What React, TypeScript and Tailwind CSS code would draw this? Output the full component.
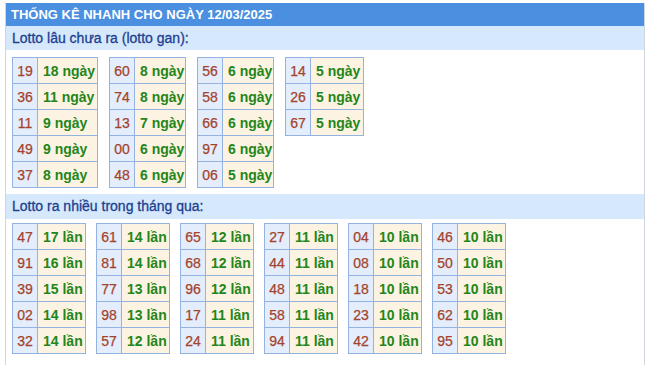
import React from "react";

type Row = [string, string];

const ganTables: { w: string; rows: Row[] }[] = [
  { w: "w-[86px]", rows: [["19", "18 ngày"], ["36", "11 ngày"], ["11", "9 ngày"], ["49", "9 ngày"], ["37", "8 ngày"]] },
  { w: "w-[77px]", rows: [["60", "8 ngày"], ["74", "8 ngày"], ["13", "7 ngày"], ["00", "6 ngày"], ["48", "6 ngày"]] },
  { w: "w-[77px]", rows: [["56", "6 ngày"], ["58", "6 ngày"], ["66", "6 ngày"], ["97", "6 ngày"], ["06", "5 ngày"]] },
  { w: "w-[79px]", rows: [["14", "5 ngày"], ["26", "5 ngày"], ["67", "5 ngày"]] },
];

const nhieuTables: Row[][] = [
  [["47", "17 lần"], ["91", "16 lần"], ["39", "15 lần"], ["02", "14 lần"], ["32", "14 lần"]],
  [["61", "14 lần"], ["81", "14 lần"], ["77", "13 lần"], ["98", "13 lần"], ["57", "12 lần"]],
  [["65", "12 lần"], ["68", "12 lần"], ["96", "12 lần"], ["17", "11 lần"], ["24", "11 lần"]],
  [["27", "11 lần"], ["44", "11 lần"], ["48", "11 lần"], ["58", "11 lần"], ["94", "11 lần"]],
  [["04", "10 lần"], ["08", "10 lần"], ["18", "10 lần"], ["23", "10 lần"], ["42", "10 lần"]],
  [["46", "10 lần"], ["50", "10 lần"], ["53", "10 lần"], ["62", "10 lần"], ["95", "10 lần"]],
];

function LotoTable({ rows, width }: { rows: Row[]; width: string }) {
  return (
    <table className={`border-collapse table-fixed self-start ${width}`}>
      <colgroup>
        <col className="w-[25px]" />
        <col />
      </colgroup>
      <tbody>
        {rows.map(([num, val]) => (
          <tr key={num} className="h-[26px]">
            <td className="border border-[#94b3e0] bg-[#e3edfb] text-center text-[#a3432d] [-webkit-text-stroke:0.25px]">
              {num}
            </td>
            <td className="border border-[#94b3e0] bg-[#fdf3e3] pl-[5px] whitespace-nowrap font-bold text-[#23861a]">
              {val}
            </td>
          </tr>
        ))}
      </tbody>
    </table>
  );
}

export default function App() {
  return (
    <div className="h-[365px] bg-white pt-[3px] pl-[5px] font-['Liberation_Sans',Arial,sans-serif]">
      <div className="w-[640px] h-[362px] border-l border-r border-[#cfd6df]">
        {/* Header */}
        <div className="h-[23px] bg-[#4a8fe0] pl-[5px] text-[13px] font-bold leading-[23px] text-white">
          THỐNG KÊ NHANH CHO NGÀY 12/03/2025
        </div>

        {/* Lotto gan */}
        <div className="h-[24px] bg-[#d6e8fb] pl-[6px] text-[14px] leading-[24px] text-[#1c3f91] [-webkit-text-stroke:0.3px]">
          Lotto lâu chưa ra (lotto gan):
        </div>
        <div className="flex gap-[11px] pl-[6px] pt-[7px] text-[14px] leading-none">
          {ganTables.map((t, i) => (
            <LotoTable key={i} rows={t.rows} width={t.w} />
          ))}
        </div>

        {/* Lotto ra nhieu */}
        <div className="mt-[6px] h-[25px] bg-[#d6e8fb] pl-[6px] text-[14px] leading-[25px] text-[#1c3f91] [-webkit-text-stroke:0.3px]">
          Lotto ra nhiều trong tháng qua:
        </div>
        <div className="flex gap-[10px] pl-[6px] pt-[4px] text-[14px] leading-none">
          {nhieuTables.map((t, i) => (
            <LotoTable key={i} rows={t} width="w-[74px]" />
          ))}
        </div>
      </div>
    </div>
  );
}
